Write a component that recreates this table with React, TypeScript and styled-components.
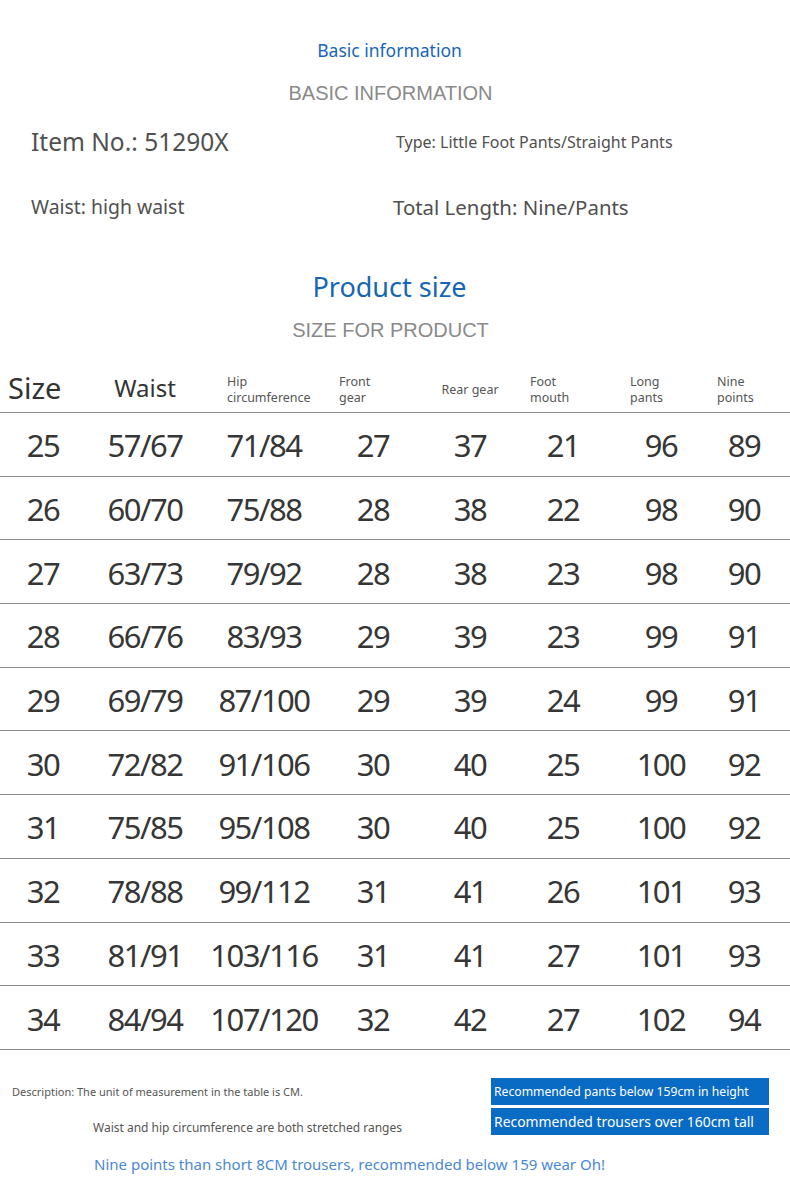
import React from "react";
import styled, { createGlobalStyle } from "styled-components";

const Global = createGlobalStyle`
  html, body { margin: 0; padding: 0; background: #fff; }
  body { font-family: "Noto Sans", "Open Sans", sans-serif; }
`;

const Page = styled.div`
  width: 790px;
  height: 1196px;
  background: #fff;
  overflow: hidden;
  padding-top: 38px;
  box-sizing: border-box;
`;

const BlueTitle = styled.div<{ $size: number; $lh: number }>`
  text-align: center;
  padding-right: 11px;
  color: #1666b6;
  font-size: ${(p) => p.$size}px;
  line-height: ${(p) => p.$lh}px;
`;

const GreySub = styled.div<{ $mt: number }>`
  margin-top: ${(p) => p.$mt}px;
  text-align: center;
  padding-right: 9px;
  font-family: "Liberation Sans", Arial, sans-serif;
  font-size: 20px;
  line-height: 24px;
  color: #8a8a8a;
`;

const InfoGrid = styled.div`
  margin-top: 22px;
  display: grid;
  grid-template-columns: 362px 1fr;
  row-gap: 35px;
  padding-left: 31px;
  color: #505050;
`;

const InfoItem = styled.div<{ $size: number; $shift?: number }>`
  font-size: ${(p) => p.$size}px;
  line-height: 30px;
  height: 30px;
  padding-left: ${(p) => p.$shift || 0}px;
  white-space: nowrap;
`;

const ProductBlock = styled.div`
  margin-top: 47px;
`;

const Table = styled.div`
  margin-top: 18px;
`;

const COLS = "86px 118px 120px 98px 96px 90px 106px 60px";

const HeadRow = styled.div`
  display: grid;
  grid-template-columns: ${COLS};
  height: 53px;
  box-sizing: border-box;
  padding-top: 4px;
  align-items: center;
  border-bottom: 1.5px solid #8c8c8c;
`;

const HeadCell = styled.div<{ $big?: number; $pad?: number; $center?: boolean }>`
  text-align: ${(p) => (p.$center ? "center" : "left")};
  padding-left: ${(p) => p.$pad || 0}px;
  font-size: ${(p) => p.$big || 12.5}px;
  line-height: ${(p) => (p.$big ? 34 : 15.5)}px;
  color: ${(p) => (p.$big ? "#333" : "#555")};
  white-space: nowrap;
  padding-top: ${(p) => (p.$big ? 0 : 3)}px;
`;

const Row = styled.div`
  display: grid;
  grid-template-columns: ${COLS};
  height: 63.7px;
  box-sizing: border-box;
  align-items: center;
  border-bottom: 1.5px solid #8c8c8c;
`;

const NumCell = styled.div`
  text-align: center;
  font-size: 31px;
  letter-spacing: -1.5px;
  line-height: 40px;
  color: #363636;
  white-space: nowrap;
  padding-top: 2px;
`;

const Footer = styled.div`
  padding-top: 28px;
`;

const FooterTop = styled.div`
  display: grid;
  grid-template-columns: 491px 278px;
`;

const Notes = styled.div`
  display: flex;
  flex-direction: column;
`;

const Note = styled.div<{ $size: number; $pad: number; $mt?: number }>`
  font-size: ${(p) => p.$size}px;
  line-height: 27px;
  padding-left: ${(p) => p.$pad}px;
  margin-top: ${(p) => p.$mt || 0}px;
  color: #555;
  white-space: nowrap;
`;

const Boxes = styled.div`
  display: flex;
  flex-direction: column;
  gap: 3px;
`;

const BlueBox = styled.div<{ $size: number }>`
  background: #0a6bc4;
  color: #fff;
  height: 27px;
  line-height: 27px;
  font-size: ${(p) => p.$size}px;
  padding-left: 3px;
  white-space: nowrap;
  overflow: hidden;
`;

const BlueNote = styled.div`
  margin-top: 12px;
  padding-left: 94px;
  color: #4a88d4;
  font-size: 15px;
  line-height: 22px;
  white-space: nowrap;
`;

const rows: string[][] = [
  ["25", "57/67", "71/84", "27", "37", "21", "96", "89"],
  ["26", "60/70", "75/88", "28", "38", "22", "98", "90"],
  ["27", "63/73", "79/92", "28", "38", "23", "98", "90"],
  ["28", "66/76", "83/93", "29", "39", "23", "99", "91"],
  ["29", "69/79", "87/100", "29", "39", "24", "99", "91"],
  ["30", "72/82", "91/106", "30", "40", "25", "100", "92"],
  ["31", "75/85", "95/108", "30", "40", "25", "100", "92"],
  ["32", "78/88", "99/112", "31", "41", "26", "101", "93"],
  ["33", "81/91", "103/116", "31", "41", "27", "101", "93"],
  ["34", "84/94", "107/120", "32", "42", "27", "102", "94"],
];

export default function App() {
  return (
    <Page>
      <Global />
      <BlueTitle $size={17.5} $lh={24}>Basic information</BlueTitle>
      <GreySub $mt={19}>BASIC INFORMATION</GreySub>
      <InfoGrid>
        <InfoItem $size={24.5}>Item No.: 51290X</InfoItem>
        <InfoItem $size={16} $shift={3}>Type: Little Foot Pants/Straight Pants</InfoItem>
        <InfoItem $size={19.4}>Waist: high waist</InfoItem>
        <InfoItem $size={20.4}>Total Length: Nine/Pants</InfoItem>
      </InfoGrid>
      <ProductBlock>
        <BlueTitle $size={27} $lh={36}>Product size</BlueTitle>
        <GreySub $mt={13}>SIZE FOR PRODUCT</GreySub>
      </ProductBlock>
      <Table>
        <HeadRow>
          <HeadCell $big={29} $pad={8}>Size</HeadCell>
          <HeadCell $big={24} $center>Waist</HeadCell>
          <HeadCell $pad={23}>Hip<br />circumference</HeadCell>
          <HeadCell $pad={15}>Front<br />gear</HeadCell>
          <HeadCell $center>Rear gear</HeadCell>
          <HeadCell $pad={12}>Foot<br />mouth</HeadCell>
          <HeadCell $pad={22}>Long<br />pants</HeadCell>
          <HeadCell $pad={3}>Nine<br />points</HeadCell>
        </HeadRow>
        {rows.map((r) => (
          <Row key={r[0]}>
            {r.map((v, i) => (
              <NumCell key={i}>{v}</NumCell>
            ))}
          </Row>
        ))}
      </Table>
      <Footer>
        <FooterTop>
          <Notes>
            <Note $size={11} $pad={12}>Description: The unit of measurement in the table is CM.</Note>
            <Note $size={12} $pad={93} $mt={9}>Waist and hip circumference are both stretched ranges</Note>
          </Notes>
          <Boxes>
            <BlueBox $size={12.2}>Recommended pants below 159cm in height</BlueBox>
            <BlueBox $size={13.9}>Recommended trousers over 160cm tall</BlueBox>
          </Boxes>
        </FooterTop>
        <BlueNote>Nine points than short 8CM trousers, recommended below 159 wear Oh!</BlueNote>
      </Footer>
    </Page>
  );
}
